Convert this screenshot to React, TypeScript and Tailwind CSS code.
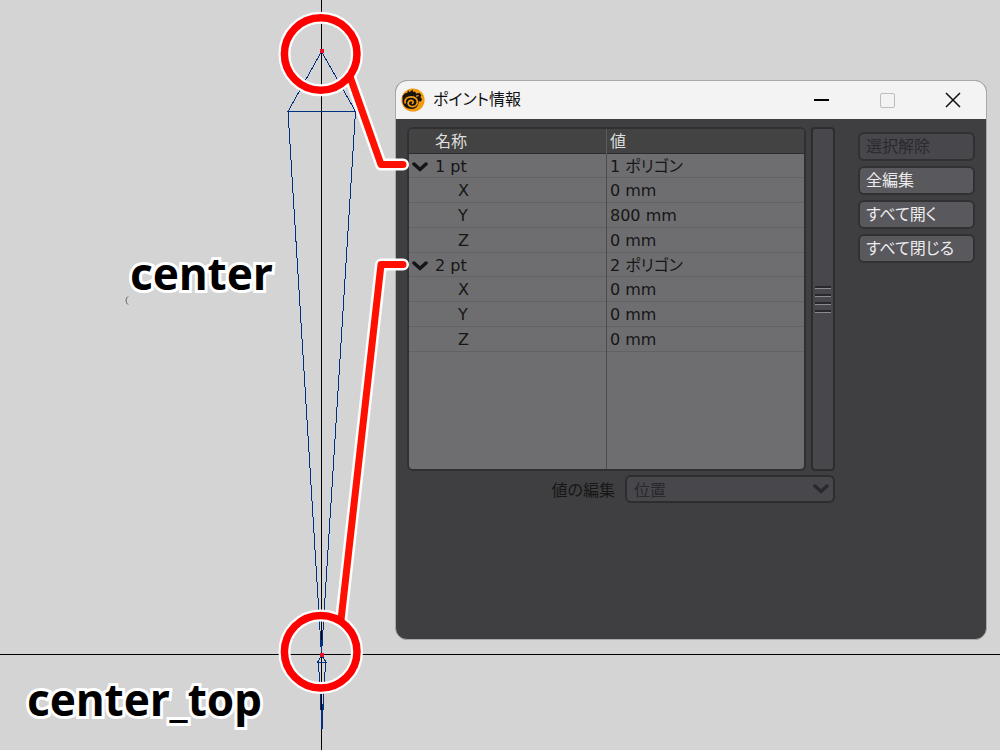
import { useState } from 'react'

type Punto = {
  id: number
  poligonos: string
  x: string
  y: string
  z: string
}

const PUNTOS: Punto[] = [
  { id: 1, poligonos: '1 ポリゴン', x: '0 mm', y: '800 mm', z: '0 mm' },
  { id: 2, poligonos: '2 ポリゴン', x: '0 mm', y: '0 mm', z: '0 mm' },
]

// ── Icons ─────────────────────────────────────────────────────────────────────
function Logo() {
  return (
    <svg viewBox="0 0 24 24" className="w-6 h-6 shrink-0" aria-hidden="true">
      <circle cx="12" cy="12" r="11.6" fill="#f29a12" />
      <path d="M1.5 8 4 5.2 6.2 5 7 2.2 8.6 4.2 11.5 1.6 12 4 14 3.4 15.2 5.4 18.6 5 20.4 7.6 19.4 9.2 21 11 20 13.4 17.6 13.2C18 17 15.4 20.6 11 21 6 21 2.4 18.4 1.6 14.6Z" fill="#17140f" />
      <path d="M4 14.8C3.6 10.8 6.6 8.6 10.4 8.8c4 .2 6.4 2.8 5.900 6-.5 2.800-3.200 4.200-6 3.700-2.400-.4-3.600-2.400-3-4.100.5-1.700 2.600-2.500 4-1.700 1.200.7 1.200 2.200.1 2.600" fill="none" stroke="#f29a12" strokeWidth="1.7" strokeLinecap="round" />
      <path d="M15 8.2l2.6-.5" fill="none" stroke="#f29a12" strokeWidth="1.2" />
    </svg>
  )
}

function Chevron({ className }: { className: string }) {
  return (
    <svg viewBox="0 0 16 10" className={className} fill="none" stroke="currentColor" strokeWidth="3.5" aria-hidden="true">
      <path d="M2 2l6 5.5L14 2" strokeLinecap="round" />
    </svg>
  )
}

// ── Viewport ──────────────────────────────────────────────────────────────────
function Malla() {
  return (
    <>
      <div className="absolute inset-x-0 top-[654px] h-px bg-black" />
      <div className="absolute inset-y-0 left-[321px] w-px bg-black" />
      <svg width="400" height="750" className="absolute left-0 top-0" fill="none" stroke="#003080" strokeWidth="1" shapeRendering="crispEdges" aria-hidden="true">
        <path d="M321.5 51.5 288 111.5H355.5L321.5 51.5M288 111.5 321.5 654.5 355.5 111.5" />
        <path d="M321.5 640V655M321.5 655.5 317.5 662.5H326.5L321.5 655.5M318.5 662.5 322 729 325.5 662.5M322.5 704V729" />
        <path d="M128 296.5c-2.5 2-2.5 6 0 8" stroke="#555" shapeRendering="auto" />
      </svg>
    </>
  )
}

function Anotaciones() {
  return (
    <svg width="420" height="750" className="absolute left-0 top-0 pointer-events-none" fill="none" strokeLinecap="round" strokeLinejoin="round" aria-hidden="true">
      <g stroke="#fff" strokeWidth="12">
        <circle cx="320.7" cy="54" r="36.3" />
        <circle cx="320.7" cy="651.7" r="36.3" />
        <path d="M350.5 78 381 164.5H403" />
        <path d="M341 620 381 264.5H403" />
      </g>
      <g stroke="#ff1000" strokeWidth="7">
        <path d="M350.5 78 381 164.5H403" />
        <path d="M341 620 381 264.5H403" />
      </g>
      <g stroke="#ff0000" strokeWidth="7.5">
        <circle cx="320.7" cy="54" r="36.3" />
        <circle cx="320.7" cy="651.7" r="36.3" />
      </g>
      <path d="M320 49h4v4h-4zM320 653h4v4h-4z" fill="#e8102a" />
    </svg>
  )
}

// ── Point table ───────────────────────────────────────────────────────────────
function FilasPunto({ punto }: { punto: Punto }) {
  const [open, setOpen] = useState(true)
  const ejes = [['X', punto.x], ['Y', punto.y], ['Z', punto.z]]
  return (
    <>
      <tr className="h-6 border-b border-[#626265]">
        <td className="p-0 pt-[3px] border-r border-[#4c4c4e]">
          <div className="flex items-center">
            <button
              onClick={() => setOpen(!open)}
              aria-expanded={open}
              aria-label={`${punto.id} pt`}
              className="w-[26px] pl-[3px] shrink-0"
            >
              <Chevron className="w-4 h-[10px] text-[#151515]" />
            </button>
            <span>{punto.id} pt</span>
          </div>
        </td>
        <td className="p-0 pt-[3px] pl-[3px]">{punto.poligonos}</td>
      </tr>
      {open && ejes.map(([eje, valor]) => (
        <tr key={eje} className="h-[25px] border-b border-[#626265]">
          <td className="p-0 pt-[3px] pl-[49px] border-r border-[#4c4c4e]">{eje}</td>
          <td className="p-0 pt-[3px] pl-[3px]">{valor}</td>
        </tr>
      ))}
    </>
  )
}

function Barra() {
  return (
    <div className="w-6 shrink-0 rounded border-2 border-[#2d2d30] bg-[#48474c] flex flex-col items-center justify-center gap-[5px]">
      {[0, 1, 2, 3].map(i => (
        <span key={i} className="w-4 h-[3px] bg-[#29292c] border-b border-[#8b8a8f]" />
      ))}
    </div>
  )
}

function Accion({ children, disabled = false }: { children: string; disabled?: boolean }) {
  return (
    <button
      disabled={disabled}
      className="h-[29px] w-full px-[6px] pt-px rounded-md border-2 border-[#313134] bg-[#59585d] text-[#ececec] text-left leading-5 disabled:bg-[#48474c] disabled:text-[#2a2a2d]"
    >
      {children}
    </button>
  )
}

// ── Window ────────────────────────────────────────────────────────────────────
function Ventana() {
  return (
    <section className="absolute left-[395px] right-[13px] top-20 rounded-xl border border-[#a9a9a9] bg-[#3f3f41] overflow-hidden">
      <header className="flex items-center h-[38px] pl-[5px] bg-[#f3f3f3] text-[#111]">
        <Logo />
        <h1 className="flex-1 pl-2">ポイント情報</h1>
        <button aria-label="最小化" className="w-[66px] h-full flex items-center justify-center">
          <span className="w-[15px] h-[2px] bg-black" />
        </button>
        <button aria-label="最大化" disabled className="w-[66px] h-full flex items-center justify-center">
          <span className="w-[15px] h-[15px] border border-[#bdbdbd] rounded-xs" />
        </button>
        <button aria-label="閉じる" className="w-[66px] h-full flex items-center justify-center">
          <svg viewBox="0 0 16 16" className="w-4 h-4" stroke="#111" strokeWidth="1.5" aria-hidden="true">
            <path d="M1 1l14 14M15 1 1 15" />
          </svg>
        </button>
      </header>

      <div className="flex items-start gap-[23px] px-[11px] pt-2 pb-[136px]">
        <div className="flex-1">
          <div className="flex gap-[5px] h-[344px]">
            <div className="flex-1 rounded-md border-2 border-[#303033] bg-[#6e6e70] overflow-hidden">
              <table className="w-full h-full table-fixed border-collapse text-[#161616] leading-5">
                <thead>
                  <tr className="h-6 bg-[#434343] text-[#dedede] border-b border-[#2c2c2e]">
                    <th className="p-0 pt-[3px] pl-[26px] text-left font-normal border-r border-[#5c5c5e]">名称</th>
                    <th className="p-0 pt-[3px] pl-[3px] text-left font-normal">値</th>
                  </tr>
                </thead>
                <tbody>
                  {PUNTOS.map(p => <FilasPunto key={p.id} punto={p} />)}
                  <tr>
                    <td className="p-0 border-r border-[#4c4c4e]" />
                    <td className="p-0" />
                  </tr>
                </tbody>
              </table>
            </div>
            <Barra />
          </div>
          <div className="flex items-center justify-end gap-[10px] pt-1">
            <label htmlFor="edicion" className="pt-1 text-[#161616]">値の編集</label>
            <div className="relative w-[210px]">
              <select
                id="edicion"
                disabled
                className="appearance-none w-full h-7 pl-[7px] pt-[3px] rounded-md border-2 border-[#2d2d30] bg-[#48474c] text-[#29292c] leading-5 opacity-100"
              >
                <option>位置</option>
              </select>
              <Chevron className="absolute right-[6px] top-[9px] w-4 h-[10px] text-[#2a2a2d] pointer-events-none" />
            </div>
          </div>
        </div>

        <div className="w-[117px] shrink-0 flex flex-col gap-[5px] pt-[5px]">
          <Accion disabled>選択解除</Accion>
          <Accion>全編集</Accion>
          <Accion>すべて開く</Accion>
          <Accion>すべて閉じる</Accion>
        </div>
      </div>
    </section>
  )
}

function Etiqueta({ children, className }: { children: string; className: string }) {
  return (
    <p className={`absolute font-['Noto_Sans','Open_Sans',sans-serif] font-bold text-[44px] leading-[60px] text-black [-webkit-text-stroke:6px_white] [paint-order:stroke_fill] ${className}`}>
      {children}
    </p>
  )
}

export default function App() {
  return (
    <main className="relative min-h-screen w-full overflow-hidden bg-[#d4d4d4] text-base font-['DejaVu_Sans','Noto_Sans_CJK_JP',sans-serif] [font-feature-settings:'palt']" lang="ja">
      <Malla />
      <Etiqueta className="left-[130px] top-[243px]">center</Etiqueta>
      <Etiqueta className="left-[27px] top-[669px]">center_top</Etiqueta>
      <Ventana />
      <Anotaciones />
    </main>
  )
}
